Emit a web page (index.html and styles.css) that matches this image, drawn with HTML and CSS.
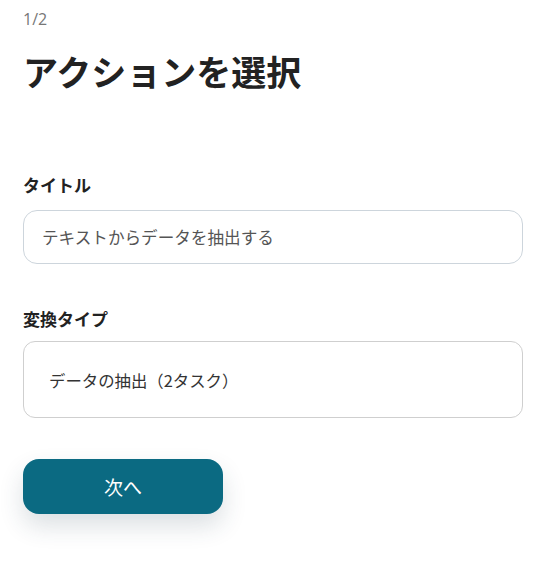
FILE: index.html
```html
<!DOCTYPE html>
<html lang="ja">
<head>
<meta charset="utf-8">
<link rel="stylesheet" href="styles.css">
</head>
<body>
<main class="page">
  <div class="step">1/2</div>
  <h1 class="title">アクションを選択</h1>
  <section class="field field-title">
    <label class="label">タイトル</label>
    <div class="input">テキストからデータを抽出する</div>
  </section>
  <section class="field field-type">
    <label class="label">変換タイプ</label>
    <div class="select">データの抽出（2タスク）</div>
  </section>
  <button class="next">次へ</button>
</main>
</body>
</html>
```
FILE: styles.css
```css
* { box-sizing: border-box; }
html, body { margin: 0; padding: 0; background: #fff; }
body {
  font-family: "Noto Sans CJK JP", "Noto Sans", sans-serif;
  color: #222;
}
.page {
  padding: 8px 23px 60px 23px;
  width: 545px;
}
.step {
  font-family: "Open Sans", "Noto Sans", sans-serif;
  font-size: 16px;
  line-height: 22px;
  color: #777;
}
.title {
  margin: 19px 0 0 0;
  font-size: 35px;
  line-height: 44px;
  font-weight: 700;
  color: #222;
}
.field { display: flex; flex-direction: column; }
.field-title { margin-top: 80px; }
.field-type { margin-top: 43px; }
.label {
  font-size: 17px;
  line-height: 24px;
  font-weight: 700;
  color: #222;
}
.input {
  margin-top: 13px;
  width: 500px;
  height: 54px;
  border: 1px solid #cdd5dc;
  border-radius: 14px;
  padding: 0 18px;
  display: flex;
  align-items: center;
  font-size: 16.6px;
  color: #555;
}
.select {
  margin-top: 10px;
  width: 500px;
  height: 77px;
  border: 1px solid #cfcfcf;
  border-radius: 12px;
  padding: 0 25px;
  display: flex;
  align-items: center;
  font-size: 16.4px;
  color: #333;
}
.next {
  margin-top: 41px;
  width: 200px;
  height: 55px;
  border: none;
  border-radius: 16px;
  background: #0b6a82;
  color: #fff;
  font-family: "Noto Sans CJK JP", sans-serif;
  font-size: 19px;
  box-shadow: 0 12px 24px rgba(40, 60, 80, 0.16);
}
```
